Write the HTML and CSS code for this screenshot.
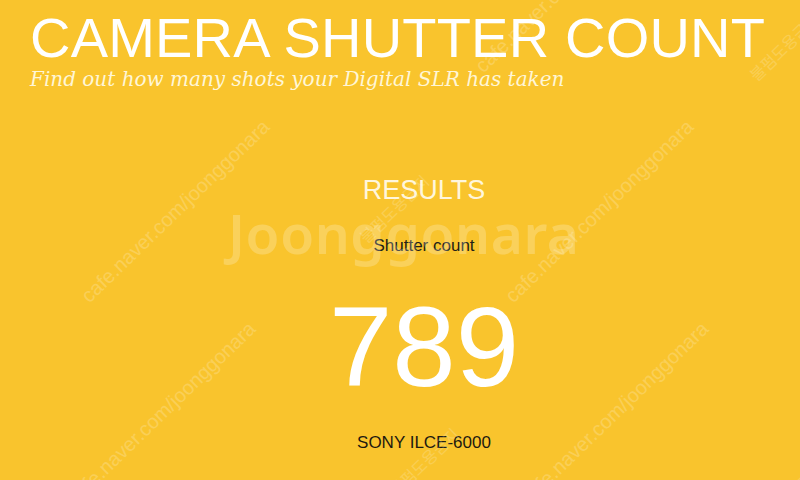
FILE: index.html
```html
<!DOCTYPE html>
<html lang="en">
<head>
<meta charset="utf-8">
<title>Camera Shutter Count</title>
<link rel="stylesheet" href="styles.css">
</head>
<body>
<div class="page">
  <header class="header">
    <h1 class="title">CAMERA SHUTTER COUNT</h1>
    <p class="subtitle">Find out how many shots your Digital SLR has taken</p>
  </header>
  <main class="results">
    <h2 class="results-title">RESULTS</h2>
    <p class="label">Shutter count</p>
    <p class="count">789</p>
    <p class="model">SONY ILCE-6000</p>
  </main>
  <div class="wm wm-logo">Joonggonara</div>
  <div class="wm wm-url wm-u1">cafe.naver.com/joonggonara</div>
  <div class="wm wm-url wm-u2">cafe.naver.com/joonggonara</div>
  <div class="wm wm-url wm-u3">cafe.naver.com/joonggonara</div>
  <div class="wm wm-url wm-u4">cafe.naver.com/joonggonara</div>
  <div class="wm wm-url wm-u5">cafe.naver.com/joonggonara</div>
  <div class="wm wm-ko wm-k1">불펌도용금지</div>
  <div class="wm wm-ko wm-k2">불펌도용금지</div>
  <div class="wm wm-ko wm-k3">불펌도용금지</div>
  <div class="wm wm-ko wm-k4">불펌도용금지</div>
</div>
</body>
</html>
```
FILE: styles.css
```css
html, body {
  margin: 0;
  padding: 0;
}
body {
  background: #f9c42d;
  width: 800px;
  height: 480px;
  overflow: hidden;
  font-family: "Liberation Sans", Arial, sans-serif;
}
.page {
  position: relative;
  width: 800px;
  height: 480px;
  overflow: hidden;
}
.header {
  padding: 10px 0 0 30px;
}
.title {
  margin: 0;
  font-size: 56px;
  line-height: 56px;
  font-weight: normal;
  color: #ffffff;
  white-space: nowrap;
  letter-spacing: 0.2px;
}
.subtitle {
  margin: 0;
  font-family: "DejaVu Serif", "Liberation Serif", serif;
  font-style: italic;
  font-size: 20px;
  line-height: 26px;
  color: #fff6d6;
  white-space: nowrap;
}
.results {
  display: flex;
  flex-direction: column;
  align-items: center;
  padding-left: 48px;
  margin-top: 82px;
}
.results-title {
  margin: 0;
  font-size: 27px;
  line-height: 32px;
  font-weight: normal;
  color: #fff6dc;
}
.label {
  margin: 30px 0 0;
  font-size: 17px;
  line-height: 20px;
  color: #222018;
}
.count {
  margin: 34px 0 0;
  font-size: 114px;
  line-height: 113px;
  color: #ffffff;
}
.model {
  margin: 30px 0 0;
  font-size: 17px;
  line-height: 20px;
  color: #1e1a10;
}
.wm {
  position: absolute;
  pointer-events: none;
  white-space: nowrap;
  color: #ffffff;
}
.wm-logo {
  left: 228px;
  top: 200px;
  font-family: "Noto Sans", sans-serif;
  font-weight: 600;
  font-size: 55px;
  line-height: 66px;
  letter-spacing: 0.6px;
  opacity: 0.22;
}
.wm-url {
  font-family: "Liberation Sans", Arial, sans-serif;
  font-size: 20px;
  line-height: 24px;
  opacity: 0.2;
  transform-origin: 0 0;
  transform: rotate(-44deg);
}
.wm-u1 { left: 76px; top: 290px; }
.wm-u2 { left: 62px; top: 492px; }
.wm-u3 { left: 500px; top: 290px; }
.wm-u4 { left: 515px; top: 492px; }
.wm-u5 { left: 470px; top: 60px; }
.wm-ko {
  font-family: "Noto Sans CJK KR", sans-serif;
  font-size: 16px;
  line-height: 20px;
  opacity: 0.18;
  transform-origin: 0 0;
  transform: rotate(-44deg);
}
.wm-k1 { left: 355px; top: 232px; }
.wm-k2 { left: 745px; top: 70px; }
.wm-k3 { left: 770px; top: 500px; }
.wm-k4 { left: 385px; top: 485px; }
```
